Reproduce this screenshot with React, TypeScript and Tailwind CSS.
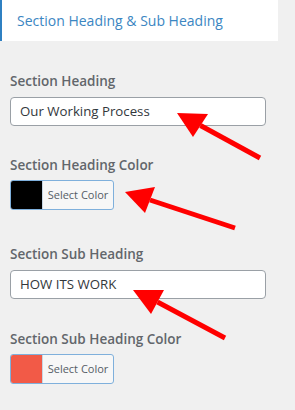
const font = { fontFamily: '"Open Sans", "Noto Sans", sans-serif' };

const Label = ({ text, className }: { text: string; className: string }) => (
  <div className={`text-[13.5px] leading-[20px] font-semibold text-[#62666b] ${className}`}>{text}</div>
);

const TextField = ({ value, className }: { value: string; className: string }) => (
  <div
    className={`w-[256px] h-[29px] bg-white border border-[#9aa0a6] rounded-[4px] flex items-center px-[9px] text-[13.25px] text-[#32373c] ${className}`}
  >
    {value}
  </div>
);

const ColorButton = ({ swatch, className }: { swatch: string; className: string }) => (
  <div
    className={`w-[104px] h-[30px] flex border border-[#7fb0dc] rounded-[3px] overflow-hidden bg-[#f7f7f7] ${className}`}
  >
    <div className={`w-[31px] h-full ${swatch}`} />
    <div className="flex-1 flex items-center justify-center text-[11px] text-[#555d66] border-l border-[#c8d6e3]">
      Select Color
    </div>
  </div>
);

const Arrow = ({ tip, a, b, tail }: { tip: number[]; a: number[]; b: number[]; tail: number[] }) => (
  <g>
    <line
      x1={(a[0] + b[0]) / 2}
      y1={(a[1] + b[1]) / 2}
      x2={tail[0]}
      y2={tail[1]}
      stroke="#ff0000"
      strokeWidth={5}
    />
    <polygon points={`${tip.join(",")} ${a.join(",")} ${b.join(",")}`} fill="#ff0000" />
  </g>
);

export default function App() {
  return (
    <div className="relative w-[295px] h-[410px] bg-[#f0f0f0] overflow-hidden" style={font}>
      <div className="w-[278px] h-[41px] bg-white border-l-2 border-[#2f80c2] pl-[15px] flex items-center text-[14px] text-[#3b86c2]">
        Section Heading &amp; Sub Heading
      </div>

      <div className="px-[10px] flex flex-col">
        <Label text="Section Heading" className="mt-[30px]" />
        <TextField value="Our Working Process" className="mt-[6px]" />

        <Label text="Section Heading Color" className="mt-[29px]" />
        <ColorButton swatch="bg-black" className="mt-[5px]" />

        <Label text="Section Sub Heading" className="mt-[34px]" />
        <TextField value="HOW ITS WORK" className="mt-[6px]" />

        <Label text="Section Sub Heading Color" className="mt-[30px]" />
        <ColorButton swatch="bg-[#f25a47]" className="mt-[5px]" />
      </div>

      <svg className="absolute inset-0 pointer-events-none" width="295" height="410" viewBox="0 0 295 410">
        <Arrow tip={[177, 113]} a={[208, 114]} b={[193, 137]} tail={[260, 158]} />
        <Arrow tip={[125, 192]} a={[155, 187]} b={[145, 213]} tail={[235, 228]} />
        <Arrow tip={[133, 290]} a={[164, 290]} b={[151, 314]} tail={[225, 338]} />
      </svg>
    </div>
  );
}
